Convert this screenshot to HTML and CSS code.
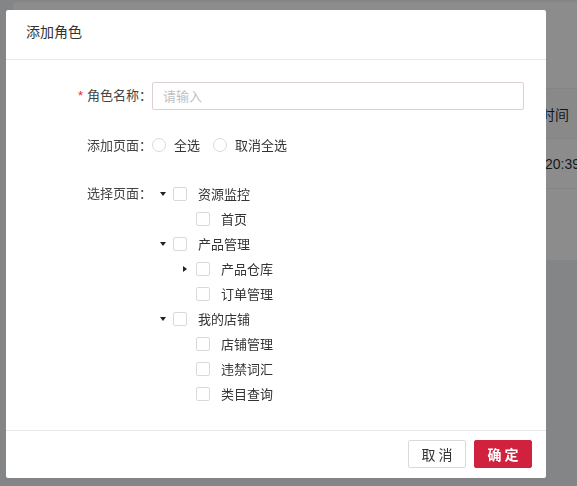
FILE: index.html
```html
<!DOCTYPE html>
<html lang="zh-CN">
<head>
<meta charset="utf-8">
<title>添加角色</title>
<link rel="stylesheet" href="styles.css">
</head>
<body>
<div class="page">
  <div class="card">
    <div class="tr th"><div class="td"></div><div class="td">时间</div></div>
    <div class="tr"><div class="td"></div><div class="td val">20:39:11</div></div>
  </div>
</div>
<div class="mask"></div>
<div class="modal">
  <div class="modal-header">添加角色</div>
  <div class="modal-body">
    <div class="form-row row-name">
      <label class="form-label"><span class="req">*</span>角色名称：</label>
      <input class="input" type="text" placeholder="请输入">
    </div>
    <div class="form-row row-radio">
      <label class="form-label">添加页面：</label>
      <div class="radio-group">
        <span class="radio-item"><span class="radio"></span>全选</span>
        <span class="radio-item"><span class="radio"></span>取消全选</span>
      </div>
    </div>
    <div class="form-row row-tree">
      <label class="form-label tree-label">选择页面：</label>
      <div class="tree">
        <div class="node lv0"><span class="switcher"><i class="caret-down"></i></span><span class="checkbox"></span><span class="title">资源监控</span></div>
        <div class="node lv1"><span class="switcher"></span><span class="checkbox"></span><span class="title">首页</span></div>
        <div class="node lv0"><span class="switcher"><i class="caret-down"></i></span><span class="checkbox"></span><span class="title">产品管理</span></div>
        <div class="node lv1"><span class="switcher"><i class="caret-right"></i></span><span class="checkbox"></span><span class="title">产品仓库</span></div>
        <div class="node lv1"><span class="switcher"></span><span class="checkbox"></span><span class="title">订单管理</span></div>
        <div class="node lv0"><span class="switcher"><i class="caret-down"></i></span><span class="checkbox"></span><span class="title">我的店铺</span></div>
        <div class="node lv1"><span class="switcher"></span><span class="checkbox"></span><span class="title">店铺管理</span></div>
        <div class="node lv1"><span class="switcher"></span><span class="checkbox"></span><span class="title">违禁词汇</span></div>
        <div class="node lv1"><span class="switcher"></span><span class="checkbox"></span><span class="title">类目查询</span></div>
      </div>
    </div>
  </div>
  <div class="modal-footer">
    <button class="btn btn-default">取 消</button>
    <button class="btn btn-primary">确 定</button>
  </div>
</div>
</body>
</html>
```

FILE: styles.css
```css
html, body {
  margin: 0;
  padding: 0;
}
body {
  background: #f0f2f5;
  font-family: "Noto Sans CJK SC", "Liberation Sans", sans-serif;
  width: 577px;
  height: 486px;
  overflow: hidden;
}
.page {
  padding: 2px 0 0 13px;
}
.card {
  height: 258px;
  box-sizing: border-box;
  padding-top: 86px;
  background: #fff;
  border-radius: 4px 0 0 4px;
}
.tr {
  display: grid;
  grid-template-columns: 528px 1fr;
  height: 49px;
  border-bottom: 1px solid #f0f0f0;
  align-items: center;
  font-size: 14px;
  color: rgba(0, 0, 0, 0.85);
  white-space: nowrap;
}
.th {
  border-top: 1px solid #f0f0f0;
  background: #fafafa;
}
.val {
  padding-left: 4px;
  font-family: "Liberation Sans", "Noto Sans CJK SC", sans-serif;
}
.mask {
  position: fixed;
  inset: 0;
  background: rgba(0, 0, 0, 0.45);
}
.modal {
  position: absolute;
  left: 6px;
  top: 10px;
  width: 540px;
  background: #fff;
  border-radius: 2px;
  display: flex;
  flex-direction: column;
}
.modal-header {
  padding: 11px 20px 18px;
  line-height: 20px;
  font-size: 14px;
  color: #333;
  border-bottom: 1px solid #e8e8e8;
}
.modal-body {
  height: 370px;
  box-sizing: border-box;
  padding: 21px 22px 0 0;
  font-size: 13px;
  color: #333;
}
.form-row {
  display: flex;
  align-items: center;
}
.row-radio {
  margin-top: 25px;
}
.row-tree {
  margin-top: 26px;
  align-items: flex-start;
}
.form-label {
  width: 146px;
  flex-shrink: 0;
  text-align: right;
  color: #444;
  line-height: 28px;
}
.row-radio .form-label {
  line-height: 20px;
}
.tree-label {
  line-height: 24px;
}
.req {
  color: #f5222d;
  margin-right: 4px;
  font-family: "Liberation Sans", sans-serif;
}
.input {
  flex: 1;
  height: 28px;
  box-sizing: border-box;
  border: 1px solid #dccfd5;
  border-radius: 2px;
  padding: 0 10px;
  font-size: 13px;
  font-family: inherit;
  color: #333;
  outline: none;
}
.input::placeholder {
  color: #bfbfbf;
}
.radio-group {
  display: flex;
  align-items: center;
  height: 20px;
}
.radio-item {
  display: flex;
  align-items: center;
  gap: 8px;
  margin-right: 13px;
  color: #333;
  line-height: 20px;
}
.radio {
  width: 14px;
  height: 14px;
  box-sizing: border-box;
  border: 1px solid #d9d9d9;
  border-radius: 50%;
}
.tree {
  display: flex;
  flex-direction: column;
}
.node {
  display: flex;
  align-items: center;
  height: 25px;
}
.lv1 {
  padding-left: 23px;
}
.switcher {
  width: 21px;
  height: 14px;
  display: flex;
  align-items: center;
  justify-content: center;
}
.caret-down {
  width: 0;
  height: 0;
  border-left: 3.5px solid transparent;
  border-right: 3.5px solid transparent;
  border-top: 4px solid #222;
}
.caret-right {
  width: 0;
  height: 0;
  border-top: 3.5px solid transparent;
  border-bottom: 3.5px solid transparent;
  border-left: 4.5px solid #222;
  margin-left: -2px;
}
.checkbox {
  width: 14px;
  height: 14px;
  box-sizing: border-box;
  border: 1px solid #d9d9d9;
  border-radius: 2px;
  background: #fff;
}
.title {
  margin-left: 11px;
  color: #333;
}
.modal-footer {
  border-top: 1px solid #e8e8e8;
  padding: 9px 14px 10px;
  display: flex;
  justify-content: flex-end;
  gap: 8px;
}
.btn {
  width: 58px;
  height: 28px;
  box-sizing: border-box;
  border-radius: 2px;
  font-size: 14px;
  font-family: inherit;
  padding: 0;
  line-height: 26px;
}
.btn-default {
  background: #fff;
  border: 1px solid #d9d9d9;
  color: #333;
}
.btn-primary {
  background: #d0213e;
  border: 1px solid #d0213e;
  color: #fff;
  font-weight: 700;
}
```
